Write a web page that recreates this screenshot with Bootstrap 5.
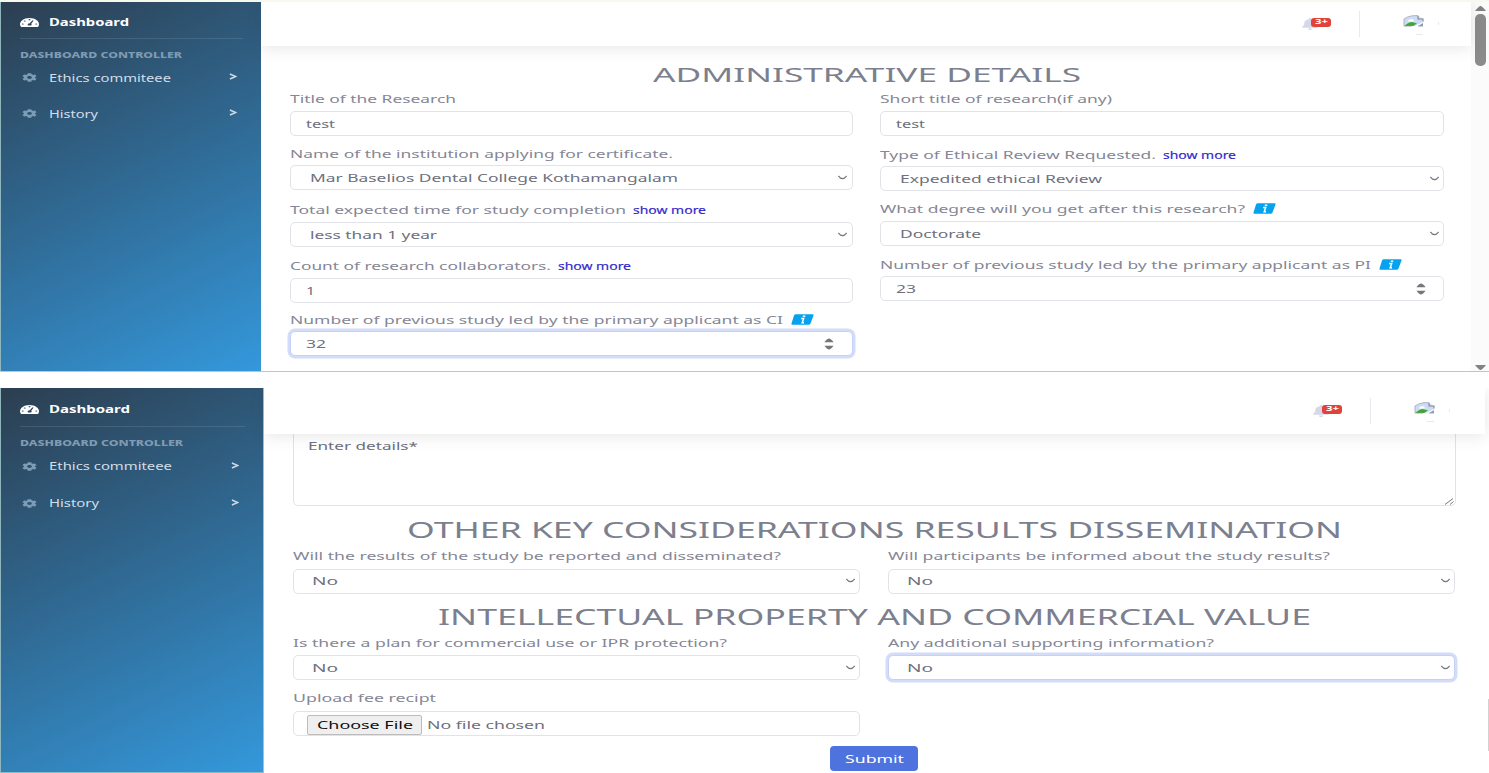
<!DOCTYPE html>
<html lang="en">
<head>
<meta charset="utf-8">
<title>Ethics committee dashboard</title>
<link href="https://cdn.jsdelivr.net/npm/bootstrap@5.3.0/dist/css/bootstrap.min.css" rel="stylesheet">
<style>
html, body { height: 773px; overflow: hidden; }
body { font-family: "Noto Sans", sans-serif; font-size: 11px; line-height: 20px; color: #858796; background: #fff; border-top: 2px solid #f7f9ec; }
.wide { display: inline-block; white-space: nowrap; transform-origin: 0 50%; }
.pane { height: 370px; border-bottom: 1px solid #c4c4c6; }
.pane-b { height: 385px; margin-top: 16px; overflow: hidden; }
.side { width: 261px; flex: none; border-left: 1.5px solid #8fb6bd; background: linear-gradient(153deg, #2c3e50, #3498db); padding: 0 18px 0 18.5px; color: #d3dde6; font-size: 10px; line-height: 14px; }
.pane-b .side { width: 264px; border-right: 1px solid #9cc4cc; border-bottom: 1px solid #7fc0cf; }
.brand { height: 37px; padding-top: 4px; color: #fff; font-weight: 700; border-bottom: 1px solid #ffffff1c; }
.pane-b .brand { height: 39px; }
.brand svg { width: 19px; height: 9px; margin-right: 10.5px; }
.side-title { height: 31px; line-height: 31px; font-size: 8px; font-weight: 800; color: #7f9bb3; }
.side-link { height: 15px; margin-bottom: 21px; padding-right: 6px; }
.pane-b .side-link { height: 16px; margin-bottom: 21px; }
.side-link .cog { width: 15px; height: 9px; margin: 0 12px 0 2px; fill: #7d9cb5; }
.side-link .chev { width: 8px; height: 7px; margin: -2px 0 0 auto; }
.topbar { height: 44px; position: relative; z-index: 2; background: #fff; box-shadow: 0 2px 16px rgba(58,59,69,.13); padding-right: 32px; }
.pane-b .topbar { height: 46px; padding-right: 35px; margin-right: 4px; }
.bell { position: relative; width: 29px; height: 12px; margin-right: 28px; }
.bell svg { display: block; width: 16px; height: 12px; fill: #d6d8ea; }
.count { position: absolute; left: 9px; top: 0; width: 20px; height: 8.5px; border-radius: 3px; background: #e0433a; color: #fff; font-size: 7px; font-weight: 700; line-height: 8.5px; padding-left: 4px; }
.sep { width: 1px; height: 26px; background: #e9eaf0; margin-right: 43px; }
.avatar { width: 36px; height: 20px; margin-top: 2px; }
.scroller { width: 18px; flex: none; background: #fbfbfb; padding: 4px 4px 1px 4px; }
.thumb { width: 10.5px; height: 52px; border-radius: 5px; background: #8b8b8b; margin: 3px 0 auto; }
.scroller svg { width: 11px; height: 5px; fill: #828282; display: block; flex: none; }
.form-a { padding: 16px 27px 0 29px; }
.title-a { font-size: 20.5px; line-height: 24px; height: 27px; color: #7c7f8e; text-align: center; font-weight: 400; margin: 0; }
.cols { display: grid; grid-template-columns: 562.5px 564px; column-gap: 27.5px; align-items: start; }
.cols-b { grid-template-columns: 567.5px 567.5px; column-gap: 27.5px; }
.left-col, .right-col { display: grid; grid-template-rows: 55px 56px 56px 54px 47px; }
.right-col { grid-template-rows: 56px 54px 56px 47px; }
.cap { display: flex; height: 22px; align-items: flex-start; white-space: nowrap; margin: 0; }
.cap-tight { height: 21px; }
.more { color: #3127cc; font-size: 10px; margin-left: 6.5px; -webkit-text-stroke: .15px #3127cc; }
.info { width: 23px; height: 11px; margin: 4px 0 0 8px; }
.box { height: 25px; min-height: 0; padding: 0 9px 0 14.5px; border: 1px solid #e2e3e8; border-radius: 5px; display: flex; align-items: center; color: #6e707e; font-size: 11px; line-height: 20px; background: #fff; }
.pick { padding: 0 3.5px 0 18.5px; }
.pick svg { width: 11px; height: 5px; margin-left: auto; margin-top: -1px; }
.box .spin { width: 10px; height: 12px; margin-left: auto; margin-right: 8.5px; fill: #777; }
.hot { border-color: #c6d1f5; box-shadow: 0 0 0 2.5px #d3dcf8; }
.form-b { padding: 0 33px 0 28.5px; }
.area { position: relative; height: 78.5px; margin-top: -7px; align-items: flex-start; padding-top: 8px; padding-left: 14px; }
.area svg { position: absolute; right: 1px; bottom: 0; width: 9px; height: 7px; }
.title-b { font-size: 21.3px; line-height: 24px; height: 24px; color: #7c7f8e; text-align: center; font-weight: 400; margin: 12.5px 0 4px; }
.title-c { margin-top: 11px; }
.cols-b .cap { height: 22.5px; }
.pick-file { flex: none; height: 20px; margin: 3px 5px 0 -1px; border: 1.5px solid #bcbcbc; border-radius: 2px; background: #efefef; color: #111; line-height: 18px; padding-left: 8.5px; width: 115px; }
.picked { margin-top: 4px; }
.send { width: 88px; height: 25px; padding: 0 0 0 15px; border: 0; border-radius: 4px; background: #4e73df; color: #fff; font-size: 11px; line-height: 25px; text-align: left; display: block; margin: 10px 0 0 537.5px; }
.edge { position: absolute; right: 0; top: 311px; width: 1.5px; height: 52px; background: #d2d2d2; }
</style>
</head>
<body>
<svg class="d-none">
  <symbol id="dash" viewBox="0 0 38 18" preserveAspectRatio="none"><path fill="#fff" d="M19 0C8 0 0 6 0 12.5 0 14.500 1 16.500 2.200 18H35.800C37 16.500 38 14.500 38 12.500 38 6 30 0 19 0Z"/><g fill="#2c4660"><ellipse cx="19" cy="3.300" rx="2" ry="1.200"/><ellipse cx="9.500" cy="6" rx="2" ry="1.200"/><ellipse cx="5.500" cy="12" rx="2" ry="1.200"/><ellipse cx="32.500" cy="12" rx="2" ry="1.200"/><path d="M25 4.500l2 .8-4.500 6.200c1.500 1.500 1 2.500-.5 3.500h-6c-1.500-2-.5-4 3.500-4.500z"/></g></symbol>
  <symbol id="cog" viewBox="0 0 512 512" preserveAspectRatio="none"><path d="M487.4 315.7l-42.6-24.6c4.3-23.2 4.3-47 0-70.2l42.6-24.6c4.900-2.800 7.100-8.600 5.500-14-11.100-35.600-30-67.800-54.700-94.600-3.800-4.100-10-5.100-14.800-2.300L380.800 110c-17.900-15.400-38.500-27.300-60.800-35.100V25.800c0-5.600-3.900-10.500-9.400-11.700-36.700-8.200-74.300-7.800-109.200 0-5.500 1.200-9.400 6.100-9.400 11.700V75c-22.200 7.900-42.800 19.800-60.800 35.100L88.700 85.500c-4.900-2.800-11-1.900-14.800 2.300-24.700 26.700-43.600 58.900-54.700 94.600-1.700 5.400.6 11.200 5.500 14L67.300 221c-4.300 23.200-4.300 47 0 70.200l-42.600 24.600c-4.900 2.800-7.100 8.600-5.500 14 11.100 35.600 30 67.800 54.700 94.600 3.800 4.100 10 5.100 14.800 2.300l42.600-24.600c17.900 15.400 38.500 27.300 60.800 35.100v49.200c0 5.600 3.900 10.500 9.400 11.700 36.700 8.200 74.300 7.800 109.200 0 5.500-1.200 9.400-6.100 9.400-11.700v-49.200c22.200-7.900 42.800-19.800 60.800-35.100l42.600 24.600c4.900 2.800 11 1.900 14.800-2.300 24.700-26.700 43.600-58.900 54.700-94.600 1.500-5.500-.7-11.300-5.600-14.100zM256 336c-44.100 0-80-35.900-80-80s35.900-80 80-80 80 35.900 80 80-35.900 80-80 80z"/></symbol>
  <symbol id="chev" viewBox="0 0 7 6" preserveAspectRatio="none"><path d="M.8.8L5.800 3 .8 5.200" fill="none" stroke="#c9d8e4" stroke-width="1.400"/></symbol>
  <symbol id="bell" viewBox="0 0 448 512" preserveAspectRatio="none"><path d="M224 512c35.320 0 63.970-28.650 63.970-64H160.030c0 35.350 28.650 64 63.970 64zm215.390-149.710c-19.320-20.760-55.470-51.990-55.470-154.290 0-77.700-54.480-139.900-127.940-155.160V32c0-17.670-14.320-32-31.980-32s-31.980 14.330-31.980 32v20.840C118.560 68.100 64.080 130.300 64.080 208c0 102.300-36.150 133.530-55.470 154.290-6 6.450-8.660 14.160-8.610 21.710.11 16.400 12.980 32 32.100 32h383.800c19.120 0 32-15.600 32.100-32 .05-7.550-2.610-15.270-8.610-21.710z"/></symbol>
  <symbol id="pic" viewBox="0 0 36 20"><path d="M1 11V4Q5 1 10 .7H15L20 4V7L12 11Z" fill="#cbdcf6"/><path d="M1 11V4Q5 1 10 .7H15" fill="none" stroke="#a9adb5" stroke-width=".9"/><path d="M15 .7V4H20V6.500" fill="none" stroke="#85888e" stroke-width="1.100"/><path d="M5 6.500Q6 3.500 8 4.500 10 3 11 6.500Z" fill="#fff"/><path d="M1.500 11Q6 6.500 10 7.200L14 8.500 10 11Z" fill="#45a532"/><path d="M15 11L20 8V11Z" fill="#89a0b9"/><path d="M1 11.200H9M15 11.200H20" stroke="#9da2aa" stroke-width=".7"/><path d="M13 19.500H20" stroke="#e2e3e8" stroke-width=".8"/><path d="M36 7V10" stroke="#d0d0da" stroke-width="1"/></symbol>
  <symbol id="down" viewBox="0 0 12 5" preserveAspectRatio="none"><path d="M1.500 1Q4 3.700 6 3.700T10.500 1" fill="none" stroke="#74767e" stroke-width="1.200"/></symbol>
  <symbol id="spin" viewBox="0 0 10 13"><path d="M0 4.500Q3 .5 5 .5T10 4.500ZM0 8.500H10Q7 12.500 5 12.500T0 8.500Z"/></symbol>
  <symbol id="info" viewBox="0 0 23 11"><path d="M5 .3H21.500Q23 .3 22.500 1.500L19.500 9.500Q19 10.700 17.500 10.700H1.500Q0 10.700.5 9.500L3 1.500Q3.500.3 5 .3Z" fill="#05a3ee"/><path d="M11.800 2.300H14.300M10.200 4.500H12.700L11.200 8.700H13" fill="none" stroke="#fff" stroke-width="1.500"/></symbol>
</svg>

<section class="pane d-flex">
  <nav class="side">
    <div class="brand d-flex align-items-center"><svg><use href="#dash"/></svg><span class="wide" data-w="80">Dashboard</span></div>
    <div class="side-title"><span class="wide" data-w="162">DASHBOARD CONTROLLER</span></div>
    <div class="side-link d-flex align-items-center"><svg class="cog"><use href="#cog"/></svg><span class="wide" data-w="122">Ethics commiteee</span><svg class="chev"><use href="#chev"/></svg></div>
    <div class="side-link d-flex align-items-center"><svg class="cog"><use href="#cog"/></svg><span class="wide" data-w="49">History</span><svg class="chev"><use href="#chev"/></svg></div>
  </nav>
  <main class="flex-grow-1">
    <header class="topbar d-flex align-items-center justify-content-end">
      <div class="bell"><svg><use href="#bell"/></svg><span class="count"><span class="wide" data-w="13">3+</span></span></div>
      <div class="sep"></div><svg class="avatar"><use href="#pic"/></svg>
    </header>
    <div class="form-a">
      <h1 class="title-a"><span class="wide" data-w="428">ADMINISTRATIVE DETAILS</span></h1>
      <div class="cols">
        <div class="left-col">
          <div><label class="cap"><span class="wide" data-w="166">Title of the Research</span></label><div class="form-control box"><span class="wide" data-w="29">test</span></div></div>
          <div><label class="cap cap-tight"><span class="wide" data-w="383">Name of the institution applying for certificate.</span></label><div class="form-control box pick"><span class="wide" data-w="368">Mar Baselios Dental College Kothamangalam</span><svg><use href="#down"/></svg></div></div>
          <div><label class="cap"><span class="wide" data-w="336">Total expected time for study completion</span><span class="wide more" data-w="73">show more</span></label><div class="form-control box pick"><span class="wide" data-w="127">less than 1 year</span><svg><use href="#down"/></svg></div></div>
          <div><label class="cap"><span class="wide" data-w="261">Count of research collaborators.</span><span class="wide more" data-w="73">show more</span></label><div class="form-control box"><span class="wide" data-w="9">1</span></div></div>
          <div><label class="cap cap-tight"><span class="wide" data-w="493">Number of previous study led by the primary applicant as CI</span><svg class="info"><use href="#info"/></svg></label><div class="form-control box hot"><span class="wide" data-w="20">32</span><svg class="spin"><use href="#spin"/></svg></div></div>
        </div>
        <div class="right-col">
          <div><label class="cap"><span class="wide" data-w="232">Short title of research(if any)</span></label><div class="form-control box"><span class="wide" data-w="29">test</span></div></div>
          <div><label class="cap cap-tight"><span class="wide" data-w="276">Type of Ethical Review Requested.</span><span class="wide more" data-w="73">show more</span></label><div class="form-control box pick"><span class="wide" data-w="202">Expedited ethical Review</span><svg><use href="#down"/></svg></div></div>
          <div><label class="cap"><span class="wide" data-w="365">What degree will you get after this research?</span><svg class="info"><use href="#info"/></svg></label><div class="form-control box pick"><span class="wide" data-w="81">Doctorate</span><svg><use href="#down"/></svg></div></div>
          <div><label class="cap cap-tight"><span class="wide" data-w="491">Number of previous study led by the primary applicant as PI</span><svg class="info"><use href="#info"/></svg></label><div class="form-control box"><span class="wide" data-w="20">23</span><svg class="spin"><use href="#spin"/></svg></div></div>
        </div>
      </div>
    </div>
  </main>
  <div class="scroller d-flex flex-column"><svg viewBox="0 0 11 5"><path d="M0 5Q4 0 5.500 0T11 5Z"/></svg><div class="thumb"></div><svg viewBox="0 0 11 5"><path d="M0 0Q4 5 5.500 5T11 0Z"/></svg></div>
</section>

<section class="pane-b d-flex position-relative">
  <nav class="side">
    <div class="brand d-flex align-items-center"><svg><use href="#dash"/></svg><span class="wide" data-w="81">Dashboard</span></div>
    <div class="side-title"><span class="wide" data-w="163">DASHBOARD CONTROLLER</span></div>
    <div class="side-link d-flex align-items-center"><svg class="cog"><use href="#cog"/></svg><span class="wide" data-w="123">Ethics commiteee</span><svg class="chev"><use href="#chev"/></svg></div>
    <div class="side-link d-flex align-items-center"><svg class="cog"><use href="#cog"/></svg><span class="wide" data-w="50">History</span><svg class="chev"><use href="#chev"/></svg></div>
  </nav>
  <main class="flex-grow-1">
    <header class="topbar d-flex align-items-center justify-content-end">
      <div class="bell"><svg><use href="#bell"/></svg><span class="count"><span class="wide" data-w="13">3+</span></span></div>
      <div class="sep"></div><svg class="avatar"><use href="#pic"/></svg>
    </header>
    <div class="form-b">
      <div class="form-control box area"><span class="wide" data-w="110">Enter details*</span><svg viewBox="0 0 9 7"><path d="M0 6.500L8 .5M5 6.500L8.500 3.500" stroke="#777" fill="none"/></svg></div>
      <h2 class="title-b"><span class="wide" data-w="935">OTHER KEY CONSIDERATIONS RESULTS DISSEMINATION</span></h2>
      <div class="cols cols-b">
        <div><label class="cap"><span class="wide" data-w="488">Will the results of the study be reported and disseminated?</span></label><div class="form-control box pick"><span class="wide" data-w="26">No</span><svg><use href="#down"/></svg></div></div>
        <div><label class="cap"><span class="wide" data-w="442">Will participants be informed about the study results?</span></label><div class="form-control box pick"><span class="wide" data-w="26">No</span><svg><use href="#down"/></svg></div></div>
      </div>
      <h2 class="title-b title-c"><span class="wide" data-w="873">INTELLECTUAL PROPERTY AND COMMERCIAL VALUE</span></h2>
      <div class="cols cols-b">
        <div><label class="cap"><span class="wide" data-w="434">Is there a plan for commercial use or IPR protection?</span></label><div class="form-control box pick"><span class="wide" data-w="26">No</span><svg><use href="#down"/></svg></div></div>
        <div><label class="cap"><span class="wide" data-w="326">Any additional supporting information?</span></label><div class="form-control box pick hot"><span class="wide" data-w="26">No</span><svg><use href="#down"/></svg></div></div>
      </div>
      <div class="cols cols-b mt-2">
        <div><label class="cap"><span class="wide" data-w="143">Upload fee recipt</span></label><div class="form-control box"><span class="pick-file"><span class="wide" data-w="96">Choose File</span></span><span class="wide picked" data-w="118">No file chosen</span></div></div>
      </div>
      <button class="btn send"><span class="wide" data-w="59">Submit</span></button>
    </div>
  </main>
  <div class="edge"></div>
</section>
<script src="https://cdn.jsdelivr.net/npm/bootstrap@5.3.0/dist/js/bootstrap.bundle.min.js"></script>
<script>
/* Widen each run of text to its data-w width. */
document.querySelectorAll('.wide').forEach(el => {
  const natural = el.getBoundingClientRect().width, w = +el.dataset.w;
  el.style.transform = `scaleX(${w / natural})`;
  el.style.marginRight = `${w - natural}px`;
});
</script>
</body>
</html>
